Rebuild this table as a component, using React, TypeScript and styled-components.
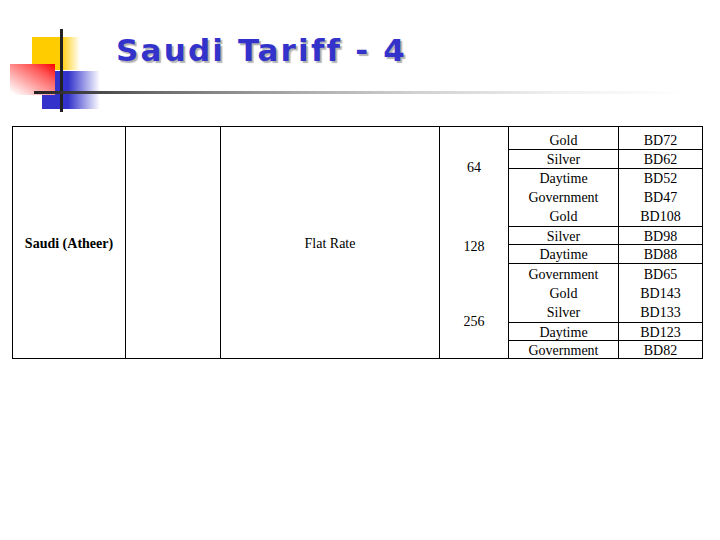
import { FC } from "react";
import styled, { createGlobalStyle } from "styled-components";

const GlobalStyle = createGlobalStyle`
    body {
        margin: 0;
        background: #fff;
        font-family: "Liberation Serif", "Times New Roman", serif;
    }
`

const Page = styled.div`
    position: relative;
    width: 720px;
    height: 540px;
    overflow: hidden;
`

const Logo = styled.svg`
    position: absolute;
    left: 0;
    top: 0;
`

const Title = styled.h1`
    margin: 30px 0 0 116px;
    height: 40px;
    font-family: "DejaVu Sans", sans-serif;
    font-weight: bold;
    font-size: 31px;
    line-height: 40px;
    letter-spacing: 2.2px;
    color: #3333cc;
    text-shadow: 2px 2px 1px rgba(0, 0, 0, 0.3);
`

const Rule = styled.div`
    position: relative;
    z-index: 1;
    margin: 21px 0 0 34px;
    width: 656px;
    height: 3px;
    background: linear-gradient(to right, #222 0%, #6a6a6a 18%, #aaa 40%, #d0d0d0 58%, #f0f0f0 80%, #fff 100%);
`

const Grid = styled.div`
    display: grid;
    grid-template-columns: 113px 95px 219px 69px 110px 84px;
    grid-template-rows: 23px 19px 19px 19px 20px 18px 19px 20px 19px 20px 18px 18px;
    width: max-content;
    margin: 32px 0 0 12px;
    border-top: 1px solid #000;
    border-left: 1px solid #000;
    font-family: "Liberation Serif", "Times New Roman", serif;
    font-size: 14px;
    color: #000;
`

const Cell = styled.div<{ $col: number; $rows: string; $open?: boolean; $bold?: boolean; $drop?: number }>`
    grid-column: ${p => p.$col};
    grid-row: ${p => p.$rows};
    display: flex;
    flex-direction: column;
    justify-content: center;
    align-items: center;
    padding-top: ${p => p.$drop ?? 2}px;
    border-right: 1px solid #000;
    border-bottom: ${p => (p.$open ? 'none' : '1px solid #000')};
    font-weight: ${p => (p.$bold ? 'bold' : 'normal')};
    white-space: nowrap;
`

const Line = styled.span`
    flex: 1;
    display: flex;
    align-items: center;
    line-height: 1;
`

const sizes = [
    { label: '64', rows: '1 / 5' },
    { label: '128', rows: '5 / 9' },
    { label: '256', rows: '9 / 13' },
]

const groups: [string, string][][] = [
    [['Gold', 'BD72']],
    [['Silver', 'BD62']],
    [['Daytime', 'BD52'], ['Government', 'BD47'], ['Gold', 'BD108']],
    [['Silver', 'BD98']],
    [['Daytime', 'BD88']],
    [['Government', 'BD65'], ['Gold', 'BD143'], ['Silver', 'BD133']],
    [['Daytime', 'BD123']],
    [['Government', 'BD82']],
]

const TariffTable: FC = () => {
    let row = 1
    return (
        <Grid>
            <Cell $col={1} $rows="1 / 13" $bold>Saudi (Atheer)</Cell>
            <Cell $col={2} $rows="1 / 13" />
            <Cell $col={3} $rows="1 / 13">Flat Rate</Cell>
            {sizes.map((s, i) => (
                <Cell key={s.label} $col={4} $rows={s.rows} $open={i < sizes.length - 1}>
                    {s.label}
                </Cell>
            ))}
            {groups.map((g, i) => {
                const rows = `${row} / span ${g.length}`
                const drop = row === 1 ? 5 : g.length > 1 ? 1 : 2
                row += g.length
                return [
                    <Cell key={`p${i}`} $col={5} $rows={rows} $drop={drop}>
                        {g.map(([plan]) => <Line key={plan}>{plan}</Line>)}
                    </Cell>,
                    <Cell key={`c${i}`} $col={6} $rows={rows} $drop={drop}>
                        {g.map(([, price]) => <Line key={price}>{price}</Line>)}
                    </Cell>,
                ]
            })}
        </Grid>
    )
}

const App: FC = () => {
    return (
        <Page>
            <GlobalStyle />
            <Logo width="120" height="115" viewBox="0 0 120 115">
                <defs>
                    <linearGradient id="yel" x1="0" y1="0" x2="1" y2="0">
                        <stop offset="0" stopColor="#ffcc00" />
                        <stop offset="0.6" stopColor="#ffcc00" />
                        <stop offset="1" stopColor="#ffcc00" stopOpacity="0" />
                    </linearGradient>
                    <linearGradient id="blu" x1="0" y1="0" x2="1" y2="0">
                        <stop offset="0" stopColor="#3333cc" />
                        <stop offset="0.45" stopColor="#3333cc" />
                        <stop offset="1" stopColor="#3333cc" stopOpacity="0" />
                    </linearGradient>
                    <linearGradient id="red" x1="1" y1="0" x2="0.1" y2="1">
                        <stop offset="0" stopColor="#ff0000" />
                        <stop offset="0.3" stopColor="#ff5a5a" />
                        <stop offset="1" stopColor="#ffffff" />
                    </linearGradient>
                </defs>
                <rect x="32" y="37" width="48" height="33" fill="url(#yel)" />
                <rect x="42" y="71" width="58" height="38" fill="url(#blu)" />
                <rect x="10" y="64" width="45" height="31" fill="url(#red)" />
                <rect x="60" y="29" width="3" height="83" fill="#222" />
            </Logo>
            <Title>Saudi Tariff - 4</Title>
            <Rule />
            <TariffTable />
        </Page>
    )
}

export default App
